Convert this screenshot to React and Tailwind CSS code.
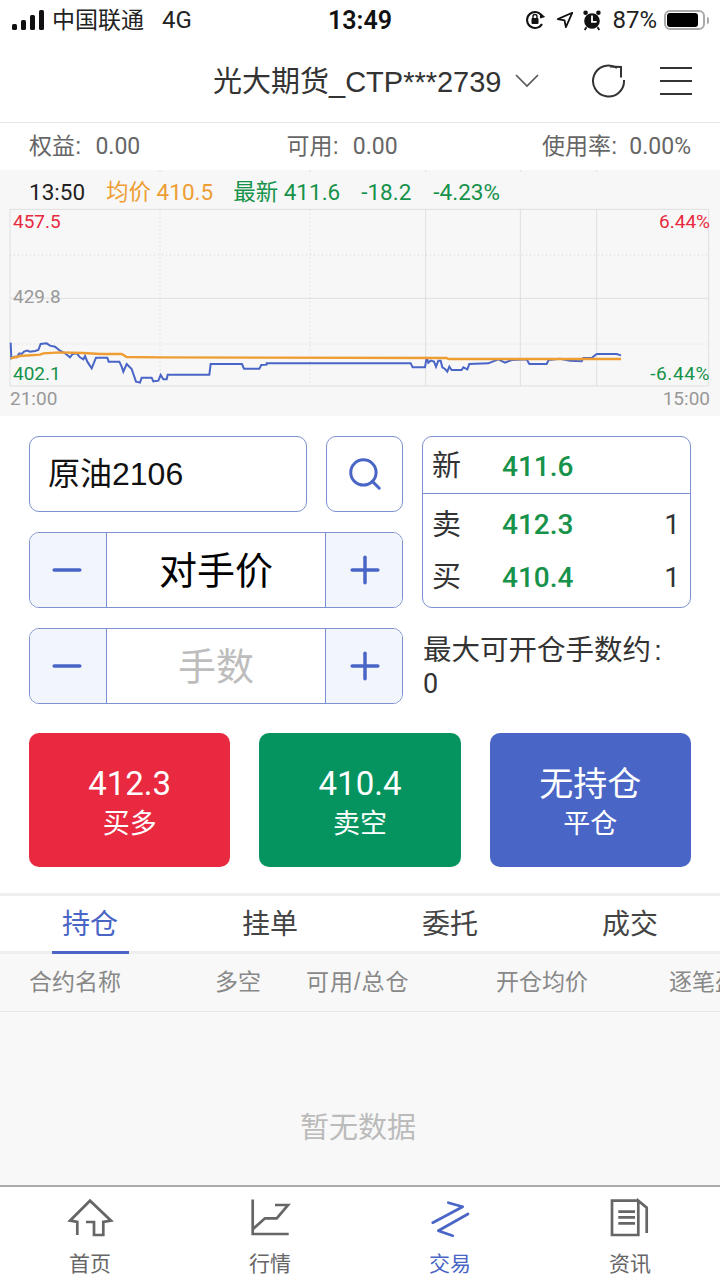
import React from 'react';
import { Search, Minus, Plus } from 'lucide-react';

const CJK = '[font-family:"Liberation_Sans","Noto_Sans_CJK_SC",sans-serif]';

const Stepper = ({ label, muted }) => (
  <div className="flex h-[76px] overflow-hidden rounded-[10px] border border-[#7d90cf]">
    <div className="flex w-[77px] items-center justify-center border-r border-[#7d90cf] bg-[#f3f5fc] pr-[3px]">
      <Minus size={44} strokeWidth={1.9} color="#4965c5" />
    </div>
    <div className={`flex flex-1 items-center justify-center pt-[2px] text-[38px] ${muted ? 'text-[#bdbdbd]' : 'text-black'}`}>{label}</div>
    <div className="flex w-[77px] items-center justify-center border-l border-[#7d90cf] bg-[#f3f5fc] pl-[2px]">
      <Plus size={44} strokeWidth={1.9} color="#4965c5" />
    </div>
  </div>
);

const QuoteRow = ({ label, price, qty }) => (
  <div className="flex flex-1 items-center pl-[9px] pr-[10px] text-[29px]">
    <span className="w-[70px] text-[#333]">{label}</span>
    <span className="flex-1 font-['Roboto'] text-[28px] font-medium text-[#16924a]">{price}</span>
    {qty && <span className="font-['Roboto'] text-[28px] text-[#333]">{qty}</span>}
  </div>
);

const TradeButton = ({ bg, top, bottom, large }) => (
  <div className={`flex h-[134px] flex-1 flex-col items-center justify-center rounded-[10px] pt-[4px] text-white ${bg}`}>
    <div className={`leading-[44px] ${large ? 'text-[34px]' : 'text-[33px] font-["Roboto"]'}`}>{top}</div>
    <div className="text-[27px] leading-[36px]">{bottom}</div>
  </div>
);

const Chart = () => (
  <svg viewBox="30 117 2100 534" className="block h-[178px] w-[700px] overflow-visible" fill="none">
    <path d="M30 118H2126V648H30Z M30 385H2126 M1277 118V648 M1561 118V648 M1790 118V648" stroke="#dfdfdf" strokeWidth="3" />
    <path d="M30 255H2126 M30 522H2126 M480 118V648 M930 118V648" stroke="#d4d4d4" strokeWidth="3" strokeDasharray="3 9" />
    <path d="M480 0V6 M930 0V6 M1277 0V6 M1561 0V6 M1790 0V6" stroke="#dfdfdf" strokeWidth="3" />
    <polyline
      stroke="#4965c5"
      strokeWidth="6"
      points="32,518 34,565 45,560 50,562 58,550 65,552 72,545 82,542 90,545 105,543 115,540 122,522 140,520 150,527 165,530 180,542 195,550 210,562 218,552 230,550 240,562 250,568 255,558 262,575 275,595 288,563 322,563 326,575 358,575 365,590 370,605 380,582 395,597 408,635 420,638 425,623 455,623 460,634 475,632 482,615 490,628 500,628 503,614 628,614 632,582 726,582 732,596 778,596 784,585 800,584 800,580 1232,580 1238,592 1275,592 1280,562 1285,578 1292,572 1302,575 1308,590 1315,572 1322,572 1327,592 1335,597 1342,605 1348,590 1355,600 1385,600 1390,592 1402,598 1408,582 1465,580 1495,568 1515,578 1535,570 1580,568 1588,582 1640,582 1646,570 1680,566 1710,572 1745,574 1750,564 1775,564 1790,552 1850,552 1863,556"
    />
    <polyline
      stroke="#ee9d33"
      strokeWidth="7"
      points="32,565 60,558 120,554 130,550 180,547 250,549 300,552 365,552 380,561 480,562 1340,564 1345,567 1863,567"
    />
  </svg>
);

const NavItem = ({ label, active, children }) => (
  <div className="flex flex-1 flex-col items-center">
    <div className="mt-[11px] h-[44px] w-[48px]">{children}</div>
    <div className={`mt-[8px] text-[21px] leading-[28px] ${active ? 'text-[#4965c5]' : 'text-[#666]'}`}>{label}</div>
  </div>
);

const App = () => {
  return (
    <div className={`flex h-[1280px] w-[720px] flex-col overflow-hidden bg-white ${CJK}`}>
      {/* status bar */}
      <div className="relative flex h-[40px] shrink-0 items-center justify-between pl-[12px] pr-[15px] text-[#222]">
        <div className="flex items-center text-[23px]">
          <svg width="33" height="20" viewBox="0 0 33 20" fill="#111">
            <rect x="0" y="14" width="5" height="6" rx="1.5" />
            <rect x="9" y="10" width="5" height="10" rx="1.5" />
            <rect x="18" y="5" width="5" height="15" rx="1.5" />
            <rect x="27" y="0" width="5" height="20" rx="1.5" />
          </svg>
          <span className="ml-[7px]">中国联通</span>
          <span className="ml-[18px] font-['Roboto'] text-[24px]">4G</span>
        </div>
        <div className="absolute left-0 right-0 top-[6px] text-center font-['Roboto'] text-[25px] font-semibold leading-[30px] text-[#111]">13:49</div>
        <div className="flex items-center">
          <svg width="20" height="22" viewBox="0 0 20 22" fill="none" stroke="#111" strokeWidth="2">
            <path d="M17 15A8 8 0 1 1 17 7" />
            <path d="M15 5l3 2.500-3 1" fill="#111" />
            <rect x="6.500" y="9" width="7" height="6" rx="1" fill="#111" stroke="none" />
            <path d="M8 9V7.500a2 2 0 0 1 4 0V9" strokeWidth="1.4" />
          </svg>
          <svg className="ml-[11px]" width="18" height="18" viewBox="0 0 20 20" fill="none" stroke="#111" strokeWidth="2">
            <path d="M18 2L2 9l7.500 1.500L11 18Z" strokeLinejoin="round" />
          </svg>
          <svg className="ml-[8px]" width="20" height="22" viewBox="0 0 20 24" fill="#111">
            <circle cx="10" cy="13" r="8.500" />
            <circle cx="3" cy="4" r="2.500" />
            <circle cx="17" cy="4" r="2.500" />
            <path d="M4 20l-2 3M16 20l2 3" stroke="#111" strokeWidth="2" />
            <path d="M9 7h2v6h4v2H9Z" fill="#fff" />
          </svg>
          <span className="ml-[10px] font-['Roboto'] text-[24px]">87%</span>
          <div className="relative ml-[7px] flex h-[20px] w-[41px] items-center rounded-[6px] border-2 border-[#aaa] p-[1px]">
            <div className="h-full w-[31px] rounded-[3px] bg-black" />
            <div className="absolute -right-[6px] h-[7px] w-[2px] rounded-r-[2px] bg-[#aaa]" />
          </div>
        </div>
      </div>

      {/* account header */}
      <div className="flex h-[83px] shrink-0 items-center border-b border-[#e6e6e6] text-[#333]">
        <span className="ml-[213px] mt-[4px] text-[29px]">光大期货_CTP***2739</span>
        <svg className="ml-[13px]" width="24" height="14" viewBox="0 0 24 14" fill="none" stroke="#555" strokeWidth="1.6">
          <path d="M1 1l11 11L23 1" />
        </svg>
        <svg className="ml-[52px]" width="36" height="36" viewBox="0 0 36 36" fill="none" stroke="#333" strokeWidth="2">
          <path d="M33 17A15.500 15.500 0 1 1 26 5" />
          <path d="M19 3.500L30 4V14.500" />
        </svg>
        <svg className="ml-[33px]" width="32" height="30" viewBox="0 0 32 30" stroke="#333" strokeWidth="2">
          <path d="M0 2H32M0 15H32M0 28H32" />
        </svg>
      </div>

      {/* funds */}
      <div className="flex h-[47px] shrink-0 items-center justify-between px-[29px] text-[23px] text-[#666]">
        <span>权益:<span className="ml-[14px] font-['Roboto']">0.00</span></span>
        <span className="-mr-[2px]">可用:<span className="ml-[14px] font-['Roboto']">0.00</span></span>
        <span>使用率:<span className="ml-[12px] font-['Roboto']">0.00%</span></span>
      </div>

      {/* chart */}
      <div className="h-[246px] shrink-0 bg-[#f7f7f7] px-[10px]">
        <div className="flex h-[39px] items-center pl-[19px] pt-[7px] text-[22.5px] font-['Roboto','Noto_Sans_CJK_SC',sans-serif]">
          <span className="text-[#222]">13:50</span>
          <span className="ml-[21px] text-[#ee9d33]">均价 410.5</span>
          <span className="ml-[20px] text-[#16924a]">最新 411.6</span>
          <span className="ml-[21px] text-[#16924a]">-18.2</span>
          <span className="ml-[22px] text-[#16924a]">-4.23%</span>
        </div>
        <div className="relative font-['Roboto'] text-[19px] leading-[24px]">
          <Chart />
          <span className="absolute left-[3px] top-[1px] text-[#e8293f]">457.5</span>
          <span className="absolute left-[3px] top-[76px] text-[#999]">429.8</span>
          <span className="absolute bottom-[1px] left-[3px] text-[#16924a]">402.1</span>
          <span className="absolute right-0 top-[1px] text-[#e8293f]">6.44%</span>
          <span className="absolute bottom-[1px] right-0 tracking-[0.6px] text-[#16924a]">-6.44%</span>
        </div>
        <div className="flex justify-between font-['Roboto'] text-[19px] leading-[24px] text-[#999]">
          <span>21:00</span>
          <span>15:00</span>
        </div>
      </div>

      {/* order form */}
      <div className="flex shrink-0 gap-[19px] px-[29px] pt-[20px]">
        <div className="flex w-[374px] flex-col gap-[20px]">
          <div className="flex gap-[19px]">
            <div className="flex h-[76px] flex-1 items-center rounded-[10px] border border-[#7d90cf] pl-[18px] text-[32px] text-[#111]">原油2106</div>
            <div className="flex h-[76px] w-[77px] items-center justify-center rounded-[10px] border border-[#7d90cf]">
              <Search size={38} strokeWidth={1.9} color="#4965c5" />
            </div>
          </div>
          <Stepper label="对手价" />
          <Stepper label="手数" muted />
        </div>
        <div className="w-[269px]">
          <div className="flex h-[172px] flex-col rounded-[10px] border border-[#7d90cf]">
            <div className="flex h-[57px] items-center border-b border-[#7d90cf] pt-[3px]">
              <QuoteRow label="新" price="411.6" />
            </div>
            <div className="flex flex-1 flex-col pb-[3px] pt-[5px]">
              <QuoteRow label="卖" price="412.3" qty="1" />
              <QuoteRow label="买" price="410.4" qty="1" />
            </div>
          </div>
          <div className="mt-[25px] pl-[1px] text-[28.5px] leading-[34px] text-[#333]">
            最大可开仓手数约<span className="ml-[3px]">:</span>
            <div className="font-['Roboto'] text-[27px]">0</div>
          </div>
        </div>
      </div>

      {/* buy / sell */}
      <div className="mt-[29px] flex shrink-0 gap-[29px] px-[29px]">
        <TradeButton bg="bg-[#e8293f]" top="412.3" bottom="买多" />
        <TradeButton bg="bg-[#05945f]" top="410.4" bottom="卖空" />
        <TradeButton bg="bg-[#4965c5]" top="无持仓" bottom="平仓" large />
      </div>

      {/* tabs */}
      <div className="mt-[26px] flex h-[61px] shrink-0 border-y-[3px] border-[#eee] text-[28px] text-[#444]">
        {['持仓', '挂单', '委托', '成交'].map((t, i) => (
          <div key={t} className="relative flex flex-1 items-center justify-center pt-[3px]">
            <span className={i === 0 ? 'text-[#4965c5]' : ''}>{t}</span>
            {i === 0 && <div className="absolute -bottom-[3px] left-[52px] h-[3px] w-[77px] bg-[#4965c5]" />}
          </div>
        ))}
      </div>

      {/* table */}
      <div className="flex h-[58px] shrink-0 items-center overflow-hidden whitespace-nowrap border-b border-[#e6e6e6] bg-[#f8f8f8] text-[23px] text-[#888]">
        <span className="ml-[29px] w-[186px] shrink-0">合约名称</span>
        <span className="w-[91px] shrink-0">多空</span>
        <span className="w-[190px] shrink-0 tracking-[1px]">可用/总仓</span>
        <span className="w-[173px] shrink-0">开仓均价</span>
        <span className="shrink-0">逐笔盈亏</span>
      </div>
      <div className="flex flex-1 items-center justify-center bg-[#f8f8f8] pr-[4px] pt-[60px] text-[29px] text-[#bbb]">暂无数据</div>

      {/* bottom nav */}
      <div className="flex h-[95px] shrink-0 border-t-2 border-[#aaa]">
        <NavItem label="首页">
          <svg viewBox="0 0 48 44" fill="none" stroke="#666" strokeWidth="2.700">
            <path d="M11.300 37V24L4 22.700L24 2.700L45 22.700L37.300 24V37H28V24H20" />
          </svg>
        </NavItem>
        <NavItem label="行情">
          <svg viewBox="0 0 48 44" fill="none" stroke="#666" strokeWidth="2.700">
            <path d="M6.700 1.500V36H42.700M7 31L19 20.300H30.700L42 7H29" />
          </svg>
        </NavItem>
        <NavItem label="交易" active>
          <svg viewBox="0 0 48 44" fill="none" stroke="#4965c5" strokeWidth="2.700" strokeLinecap="round" strokeLinejoin="round">
            <path d="M22.300 4.700L36.700 8.700L6.700 24.700M42 16L12.300 32.700L26.700 37.700" />
          </svg>
        </NavItem>
        <NavItem label="资讯">
          <svg viewBox="0 0 48 44" fill="none" stroke="#666" strokeWidth="2.700">
            <path d="M32.300 2.700H6V37H32.300V2.700L40.700 9.700V35M12.300 13.700H29M12.300 19.300H29M12.300 25.300H29" />
          </svg>
        </NavItem>
      </div>
    </div>
  );
};

export default App;
